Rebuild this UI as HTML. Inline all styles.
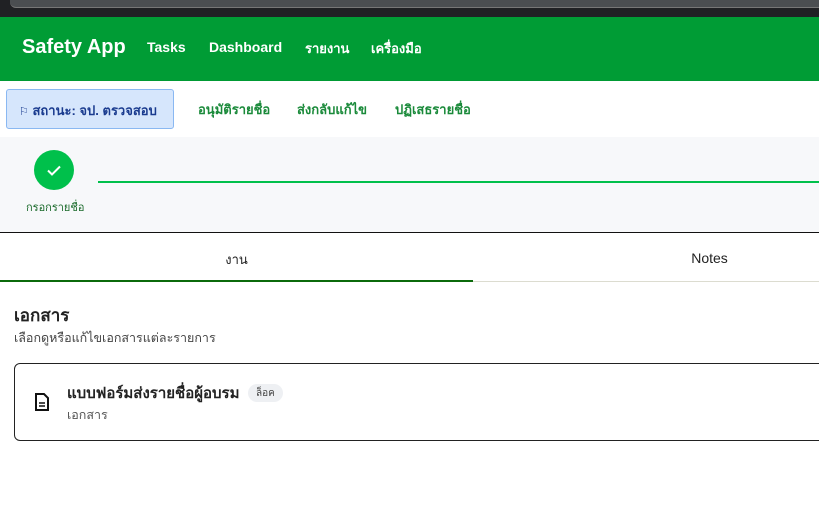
<!DOCTYPE html>
<html><head><meta charset="utf-8"><style>
*{margin:0;padding:0;box-sizing:border-box}
body{width:819px;height:529px;overflow:hidden;background:#fff;font-family:"Liberation Sans","Noto Sans CJK SC",sans-serif;position:relative}
.abs{position:absolute}
.chrome{left:0;top:0;width:819px;height:17px;background:#202124}
.chrome2{left:10px;top:0;width:809px;height:8px;background:#4b4e51;border-bottom:1px solid #777;border-radius:0 0 0 6px}
.hdr{left:0;top:17px;width:819px;height:64px;background:#009c35;color:#fff}
.hdr span{position:absolute;top:22px;font-weight:bold;font-size:14px}
.bar{left:0;top:81px;width:819px;height:56px;background:#fff;box-shadow:0 2px 3px rgba(0,0,0,.12)}
.st{left:6px;top:89px;width:168px;height:40px;background:#d6e6fc;border:1px solid #8ab8f2;border-radius:3px;color:#1a3b8f;font-size:13px;font-weight:bold;padding:10px 0 0 12px}
.act{top:99px;color:#1a8a3a;font-size:13px;font-weight:bold}
.gray{left:0;top:137px;width:819px;height:96px;background:#f7f8fa;border-bottom:1px solid #111}
</style></head><body>
<div class="abs chrome"></div><div class="abs chrome2"></div>
<div class="abs hdr">
<span style="left:22px;top:19px;font-size:20px">Safety App</span>
<span style="left:147px">Tasks</span>
<span style="left:209px">Dashboard</span>
<span style="left:305px;top:21px;font-size:13px">รายงาน</span>
<span style="left:371px;top:21px;font-size:13px">เครื่องมือ</span>
</div>
<div class="abs bar"></div>
<div class="abs st"><span style="font-size:11px;font-weight:normal">⚐</span> สถานะ: จป. ตรวจสอบ</div>
<div class="abs act" style="left:198px">อนุมัติรายชื่อ</div>
<div class="abs act" style="left:297px">ส่งกลับแก้ไข</div>
<div class="abs act" style="left:395px">ปฏิเสธรายชื่อ</div>
<div class="abs gray"></div>
<div class="abs" style="left:34px;top:150px;width:40px;height:40px;border-radius:50%;background:#00c04b"></div>
<svg class="abs" style="left:44px;top:160px" width="20" height="20" viewBox="0 0 20 20"><path d="M4 10.5l4 4 8-8" stroke="#fff" stroke-width="2" fill="none"/></svg>
<div class="abs" style="left:98px;top:181px;width:721px;height:2px;background:#00c04b"></div>
<div class="abs" style="left:26px;top:198px;font-size:11px;color:#1a6a2a">กรอกรายชื่อ</div>
<div class="abs" style="left:0;top:249px;width:473px;text-align:center;font-size:13px;color:#222">งาน</div>
<div class="abs" style="left:473px;top:250px;width:473px;text-align:center;font-size:14px;color:#222">Notes</div>
<div class="abs" style="left:0;top:280px;width:473px;height:2px;background:#0b6a0b"></div>
<div class="abs" style="left:473px;top:281px;width:346px;height:1px;background:#dcdcd0"></div>
<div class="abs" style="left:14px;top:302px;font-size:17px;font-weight:bold;color:#222">เอกสาร</div>
<div class="abs" style="left:14px;top:328px;font-size:12.5px;color:#444">เลือกดูหรือแก้ไขเอกสารแต่ละรายการ</div>
<div class="abs" style="left:14px;top:363px;width:820px;height:78px;border:1px solid #222;border-radius:6px"></div>
<svg class="abs" style="left:34px;top:392px" width="16" height="20" viewBox="0 0 16 20"><path d="M2 2h8l4 4v12H2z" stroke="#111" stroke-width="2" fill="none"/><path d="M5 11h6M5 14h6" stroke="#111" stroke-width="1.6"/></svg>
<div class="abs" style="left:67px;top:381px;font-size:15px;font-weight:bold;color:#222">แบบฟอร์มส่งรายชื่อผู้อบรม</div>
<div class="abs" style="left:248px;top:384px;height:18px;padding:2px 8px;background:#eef0f3;border-radius:9px;font-size:10px;color:#444">ล็อค</div>
<div class="abs" style="left:67px;top:405px;font-size:12.5px;color:#555">เอกสาร</div>
</body></html>
